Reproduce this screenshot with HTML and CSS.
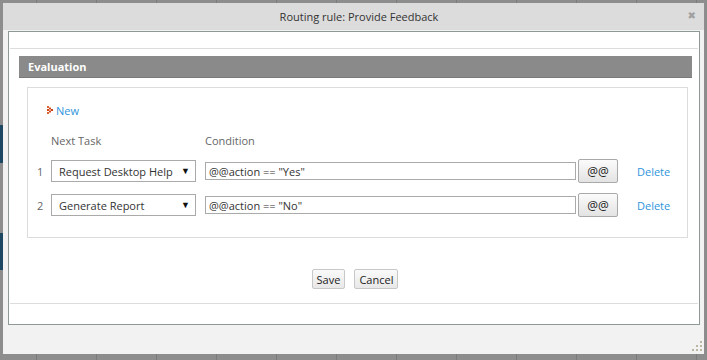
FILE: index.html
```html
<!DOCTYPE html>
<html>
<head>
  <title>Routing rule: Provide Feedback</title>
  <link rel="stylesheet" href="styles.css">
</head>
<body>
  <div class="dialog">
    <div class="titlebar">
      <span class="title">Routing rule: Provide Feedback</span>
      <span class="close">&#10006;</span>
    </div>

    <div class="frame">
      <div class="panel">
        <div class="sectionHead">Evaluation</div>

        <div class="rules">
          <a class="newLink" href="#">
            <svg width="7" height="9" viewBox="0 0 7 9">
              <rect x="0" y="0" width="2" height="2" fill="#e0662e"/>
              <rect x="0" y="3" width="2" height="2" fill="#d4471c"/>
              <rect x="0" y="6" width="2" height="2" fill="#e0662e"/>
              <rect x="2" y="1.5" width="2" height="2" fill="#d4471c"/>
              <rect x="2" y="4.5" width="2" height="2" fill="#d4471c"/>
              <rect x="4" y="3" width="2" height="2" fill="#c9401a"/>
            </svg>
            New
          </a>

          <div class="row headRow">
            <span class="num"></span>
            <span class="colTask">Next Task</span>
            <span class="colCond">Condition</span>
          </div>

          <div class="row firstRow">
            <span class="num">1</span>
            <span class="selectWrap">
              <select class="task">
                <option>Request Desktop Help</option>
                <option>Generate Report</option>
              </select>
            </span>
            <input class="cond" type="text" value='@@action == "Yes"'>
            <button class="varBtn">@@</button>
            <a class="del" href="#">Delete</a>
          </div>

          <div class="row">
            <span class="num">2</span>
            <span class="selectWrap">
              <select class="task">
                <option>Generate Report</option>
                <option>Request Desktop Help</option>
              </select>
            </span>
            <input class="cond" type="text" value='@@action == "No"'>
            <button class="varBtn">@@</button>
            <a class="del" href="#">Delete</a>
          </div>
        </div>

        <div class="actions">
          <button class="btn">Save</button>
          <button class="btn">Cancel</button>
        </div>
      </div>
    </div>

    <svg class="grip" width="12" height="11" viewBox="0 0 12 11">
      <rect x="9" y="0" width="2" height="2" fill="#bcb7a4"/>
      <rect x="5" y="4" width="2" height="2" fill="#bcb7a4"/>
      <rect x="9" y="4" width="2" height="2" fill="#bcb7a4"/>
      <rect x="1" y="8" width="2" height="2" fill="#bcb7a4"/>
      <rect x="5" y="8" width="2" height="2" fill="#bcb7a4"/>
      <rect x="9" y="8" width="2" height="2" fill="#bcb7a4"/>
    </svg>
  </div>
</body>
</html>
```

FILE: styles.css
```css
body {
  margin: 0;
  height: 360px;
  overflow: hidden;
  font-family: "Open Sans", Arial, sans-serif;
  font-size: 11px;
  color: #333;
  background:
    linear-gradient(#1d4864, #1d4864) 0 125px / 3px 38px no-repeat,
    linear-gradient(#1d4864, #1d4864) 0 233px / 3px 37px no-repeat,
    repeating-linear-gradient(90deg, #8d8d8d 0 36px, #7b7b7b 36px 37px, #8d8d8d 37px 60px);
  background-color: #8d8d8d;
}

.dialog {
  position: relative;
  margin: 3px 3px 0 3px;
  width: 701px;
  height: 351px;
  background-color: #f2f2f2;
  display: flex;
  flex-direction: column;
}

.titlebar {
  height: 27px;
  flex-shrink: 0;
  background-color: #dcdcdc;
  display: flex;
  align-items: center;
  justify-content: center;
  position: relative;
  padding-left: 11px;
}

.title {
  font-size: 11px;
  color: #333;
}

.close {
  position: absolute;
  right: 8px;
  top: 7px;
  font-size: 10px;
  font-weight: bold;
  color: #a0a0a0;
  font-family: "DejaVu Sans", sans-serif;
}

.frame {
  box-sizing: border-box;
  margin: 1px 4px 0 5px;
  height: 294px;
  flex-shrink: 0;
  border: 1px solid #8f9a98;
  background-color: #fff;
  padding: 16px 1px 0 1px;
}

.panel {
  box-sizing: border-box;
  height: 256px;
  border-top: 1px solid #dcdcdc;
  border-bottom: 1px solid #dcdcdc;
  padding: 7px 6px 0 9px;
}

.sectionHead {
  height: 21px;
  background-color: #8a8a8a;
  border-bottom: 1px solid #7a7a7a;
  color: #fff;
  font-weight: bold;
  font-size: 11px;
  line-height: 22px;
  padding-left: 9px;
}

.rules {
  margin: 9px 4px 0 8px;
  height: 151px;
  border: 1px solid #dcdcdc;
  box-sizing: border-box;
  padding: 15px 0 0 0;
}

.newLink {
  display: inline-flex;
  align-items: center;
  gap: 2px;
  margin-left: 19px;
  color: #2f95dc;
  text-decoration: none;
  font-size: 11px;
}

.row {
  display: flex;
  align-items: center;
  height: 24px;
  margin-top: 10px;
}

.headRow {
  margin-top: 14px;
  height: 16px;
  color: #666;
}

.firstRow {
  margin-top: 11px;
}

.num {
  width: 10px;
  padding-left: 9px;
  margin-right: 4px;
  color: #666;
  font-size: 11px;
}

.colTask {
  width: 154px;
}

.selectWrap {
  position: relative;
  width: 145px;
  height: 22px;
  margin-right: 9px;
}

.selectWrap::after {
  content: "\25BC";
  position: absolute;
  right: 6px;
  top: 4px;
  font-size: 9px;
  color: #111;
  pointer-events: none;
}

.task {
  appearance: none;
  width: 100%;
  height: 22px;
  border: 1px solid #aaa;
  background-color: #fff;
  font-family: "Open Sans", Arial, sans-serif;
  font-size: 11px;
  color: #333;
  padding: 0 0 0 7px;
  border-radius: 0;
}

.cond {
  width: 371px;
  height: 18px;
  border: 1px solid #aaa;
  box-sizing: border-box;
  padding: 0 3px;
  font-family: "Open Sans", Arial, sans-serif;
  font-size: 11px;
  color: #333;
  margin: 0 2px 0 0;
}

.varBtn {
  width: 40px;
  height: 24px;
  border: 1px solid #a9a9a9;
  border-radius: 2px;
  background: linear-gradient(#fbfbfb, #e3e3e3);
  font-family: "Open Sans", Arial, sans-serif;
  font-size: 12px;
  color: #222;
  padding: 0;
  margin-right: 19px;
}

.del {
  color: #2f95dc;
  text-decoration: none;
}

.actions {
  display: flex;
  justify-content: center;
  gap: 9px;
  margin-top: 31px;
  padding-right: 1px;
}

.btn {
  height: 20px;
  padding: 0 4px;
  border: 1px solid #c8c8c8;
  border-radius: 2px;
  background: linear-gradient(#fafafa, #e8e8e8);
  font-family: "Open Sans", Arial, sans-serif;
  font-size: 11px;
  color: #222;
}

.grip {
  position: absolute;
  right: 1px;
  bottom: 2px;
}
```
